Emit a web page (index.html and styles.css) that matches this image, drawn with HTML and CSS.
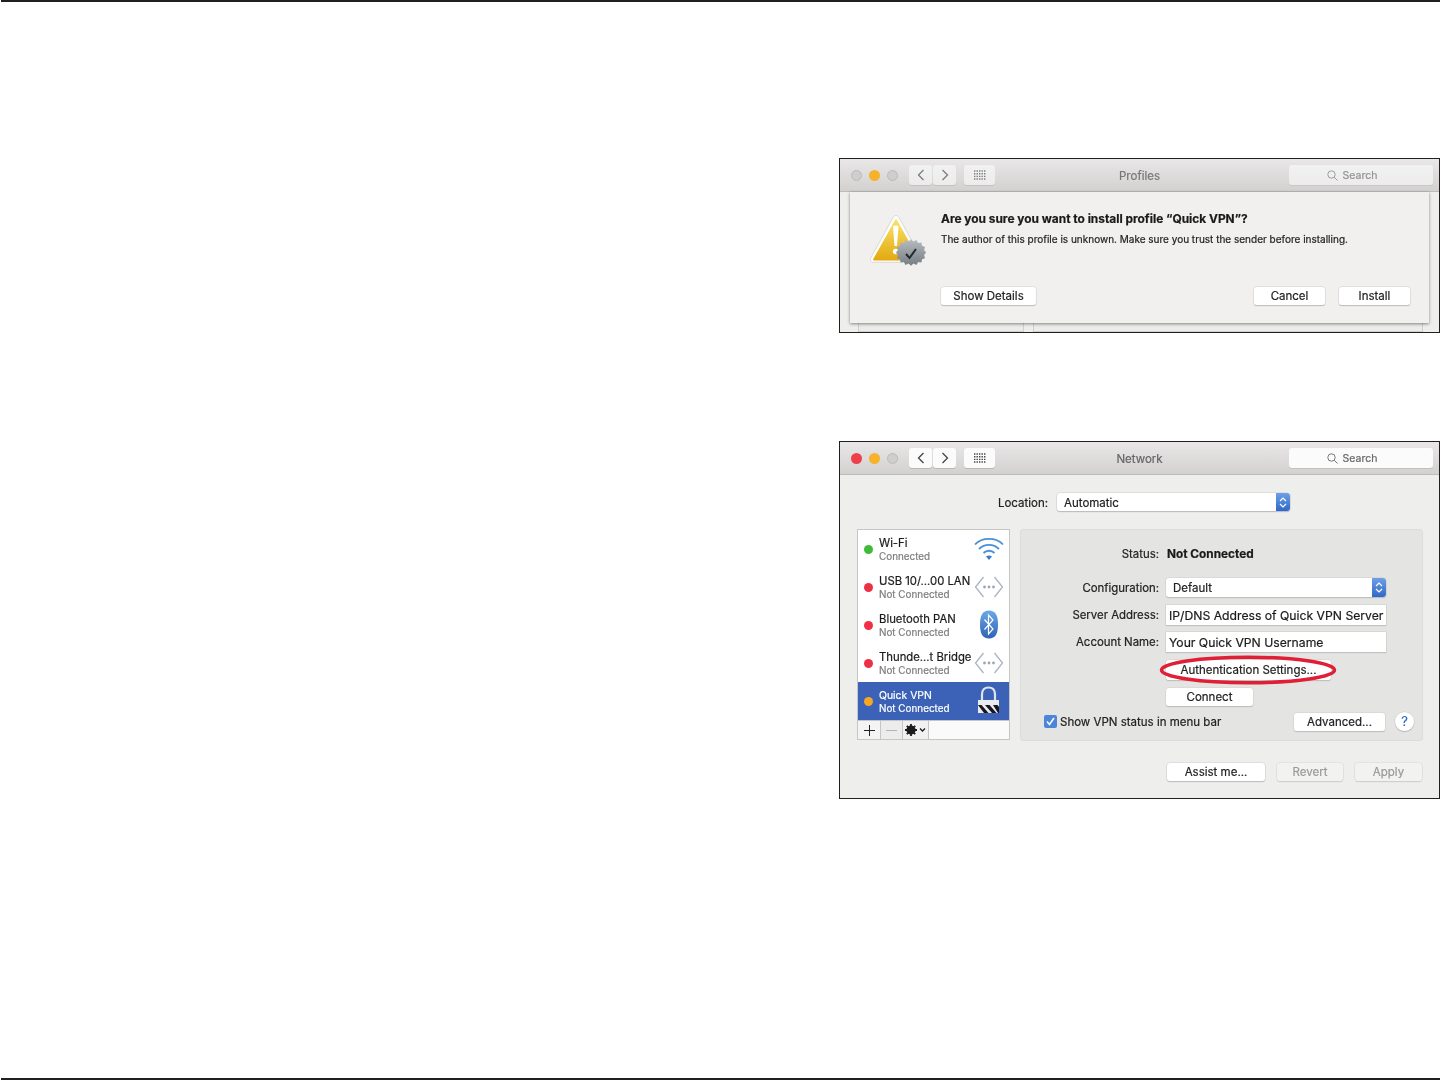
FILE: index.html
```html
<!DOCTYPE html>
<html lang="en">
<head>
<meta charset="utf-8">
<title>Quick VPN</title>
<link rel="stylesheet" href="styles.css">
</head>
<body>
<div class="rule-top"></div>
<main class="page">

<section class="win win-profiles">
  <header class="bar">
    <div class="lights"><i class="light off"></i><i class="light yellow"></i><i class="light off"></i></div>
    <div class="navs faded">
      <span class="nbtn"><svg width="10" height="14" viewBox="0 0 10 14"><path d="M7.500 2 2.500 7l5 5" class="chev"/></svg></span>
      <span class="nbtn"><svg width="10" height="14" viewBox="0 0 10 14"><path d="m2.500 2 5 5-5 5" class="chev"/></svg></span>
    </div>
    <span class="nbtn gridbtn faded"><svg width="14" height="10" viewBox="0 0 14 10"><path d="M1 1h12M1 3.700h12M1 6.400h12M1 9h12" class="dots"/></svg></span>
    <div class="title faded-title">Profiles</div>
    <div class="search faded"><svg width="11" height="11" viewBox="0 0 11 11"><circle cx="4.500" cy="4.500" r="3.700" class="lens"/><path d="m7.200 7.200 3.300 3.300" class="lens"/></svg><span>Search</span></div>
  </header>
  <div class="backdrop">
    <div class="back-pane p1"></div>
    <div class="back-pane p2"></div>
  </div>
  <div class="sheet">
    <svg class="warn" width="56" height="54" viewBox="0 0 56 54">
      <defs>
        <linearGradient id="y" x1="0" y1="0" x2="0" y2="1"><stop offset="0" stop-color="#fbe46a"/><stop offset="1" stop-color="#e2a90f"/></linearGradient>
        <linearGradient id="g" x1="0" y1="0" x2="0" y2="1"><stop offset="0" stop-color="#b6bcc0"/><stop offset="1" stop-color="#767d83"/></linearGradient>
      </defs>
      <path d="M26 .500c1.200 0 2.200.7 2.900 1.900L51 42.500c1.300 2.500.3 4.800-2.800 4.800H3.800C.7 47.300-.3 45 1 42.500L23.100 2.400C23.800 1.200 24.800.500 26 .500z" fill="#fdfdfb" stroke="#cfcdc9" stroke-width=".7"/>
      <path d="M26 3.500 48.500 43.500c.7 1.300.2 2-1.200 2H4.700c-1.400 0-1.900-.7-1.200-2z" fill="url(#y)"/>
      <path d="M23 11.500c0-1.500 5.500-1.500 5.500 0L27 31h-2.500z" fill="#fff"/><circle cx="25.700" cy="36.500" r="2.800" fill="#fff"/>
      <path d="M41 26l2.500 2.300 3-1.400 1.600 2.900 3.300-.3.600 3.200 3 1.200-.9 3.200 2 2.600-2 2.600.9 3.200-3 1.200-.6 3.200-3.300-.3-1.600 2.900-3-1.400-2.500 2.300-2.500-2.300-3 1.400-1.600-2.900-3.300.3-.6-3.200-3-1.200.9-3.200-2-2.600 2-2.600-.9-3.200 3-1.200.6-3.200 3.300.3 1.600-2.900 3 1.400z" fill="url(#g)" transform="translate(0 -1) scale(1 .97)"/>
      <path d="m36 39 3.500 4 6.500-9" fill="none" stroke="#26292c" stroke-width="2"/>
    </svg>
    <div class="sheet-body">
      <h1 class="sheet-title">Are you sure you want to install profile “Quick VPN”?</h1>
      <p class="sheet-text">The author of this profile is unknown. Make sure you trust the sender before installing.</p>
      <div class="sheet-actions">
        <span class="btn b-details">Show Details</span>
        <span class="btn b-cancel">Cancel</span>
        <span class="btn b-install">Install</span>
      </div>
    </div>
  </div>
</section>

<section class="win win-network">
  <header class="bar">
    <div class="lights"><i class="light red"></i><i class="light yellow"></i><i class="light off"></i></div>
    <div class="navs">
      <span class="nbtn"><svg width="10" height="14" viewBox="0 0 10 14"><path d="M7.500 2 2.500 7l5 5" class="chev"/></svg></span>
      <span class="nbtn"><svg width="10" height="14" viewBox="0 0 10 14"><path d="m2.500 2 5 5-5 5" class="chev"/></svg></span>
    </div>
    <span class="nbtn gridbtn"><svg width="14" height="10" viewBox="0 0 14 10"><path d="M1 1h12M1 3.700h12M1 6.400h12M1 9h12" class="dots"/></svg></span>
    <div class="title">Network</div>
    <div class="search"><svg width="11" height="11" viewBox="0 0 11 11"><circle cx="4.500" cy="4.500" r="3.700" class="lens"/><path d="m7.200 7.200 3.300 3.300" class="lens"/></svg><span>Search</span></div>
  </header>
  <div class="net-body">
    <div class="location">
      <span class="loc-label">Location:</span>
      <div class="popup loc-popup"><span>Automatic</span><i class="stepper"><svg width="8" height="13" viewBox="0 0 8 13"><path d="M1 5l3-3 3 3M1 8l3 3 3-3" class="step"/></svg></i></div>
    </div>
    <div class="columns">
      <div class="list">
        <div class="item">
          <i class="dot green"></i>
          <div class="names"><b>Wi-Fi</b><small>Connected</small></div>
          <svg class="ic" width="30" height="24" viewBox="0 0 30 24"><g fill="none" stroke="#4a90d9" stroke-width="1.800"><path d="M1 7.500C8 0 22 0 29 7.500"/><path d="M5 12c5.500-5.500 14.500-5.500 20 0"/><path d="M9.500 16c3-3 8-3 11 0"/></g><path d="M12 19.500c1.800-1.500 4.200-1.500 6 0L15 23z" fill="#3b7fcc"/></svg>
        </div>
        <div class="item">
          <i class="dot red"></i>
          <div class="names"><b>USB 10/...00 LAN</b><small>Not Connected</small></div>
          <svg class="ic" width="30" height="24" viewBox="0 0 30 24"><g fill="none" stroke="#a9b4c2" stroke-width="1.300"><path d="M9.500 2 1.500 12l8 10"/><path d="M20.500 2l8 10-8 10"/></g><g fill="#9aa6b6"><circle cx="10.500" cy="12" r="1.400"/><circle cx="15" cy="12" r="1.400"/><circle cx="19.500" cy="12" r="1.400"/></g></svg>
        </div>
        <div class="item">
          <i class="dot red"></i>
          <div class="names"><b>Bluetooth PAN</b><small>Not Connected</small></div>
          <svg class="ic ic-bt" width="20" height="29" viewBox="0 0 20 29"><defs><linearGradient id="bt" x1="0" y1="0" x2="0" y2="1"><stop offset="0" stop-color="#6fa8e8"/><stop offset="1" stop-color="#2d63b4"/></linearGradient></defs><path d="M10 .500c6.500 0 9 5 9 14s-2.500 14-9 14-9-5-9-14 2.500-14 9-14z" fill="url(#bt)"/><path d="M5.500 9.500 14 19l-4.500 5V5l4.500 5-8.500 9.500" fill="none" stroke="#fff" stroke-width="1.200"/></svg>
        </div>
        <div class="item">
          <i class="dot red"></i>
          <div class="names"><b>Thunde...t Bridge</b><small>Not Connected</small></div>
          <svg class="ic" width="30" height="24" viewBox="0 0 30 24"><g fill="none" stroke="#a9b4c2" stroke-width="1.300"><path d="M9.500 2 1.500 12l8 10"/><path d="M20.500 2l8 10-8 10"/></g><g fill="#9aa6b6"><circle cx="10.500" cy="12" r="1.400"/><circle cx="15" cy="12" r="1.400"/><circle cx="19.500" cy="12" r="1.400"/></g></svg>
        </div>
        <div class="item selected">
          <i class="dot amber"></i>
          <div class="names"><b>Quick VPN</b><small>Not Connected</small></div>
          <svg class="ic ic-lock" width="24" height="28" viewBox="0 0 24 28"><path d="M5 14V8.500C5 4 7.500 1.500 11.500 1.500S18 4 18 8.500V14" fill="none" stroke="#dfe3ec" stroke-width="2.200"/><rect x="1" y="14" width="21" height="13" fill="#e9ebef"/><path d="M1 19h3.500l7 8H7zM8 19h4.500l7 8H15zM16 19h4.500l1.500 2v6h-1z" fill="#15171c"/></svg>
        </div>
        <div class="tools">
          <span class="tool t-plus"><svg width="11" height="11" viewBox="0 0 11 11"><path d="M5.500 0v11M0 5.500h11" class="tool-line"/></svg></span>
          <span class="tool t-minus"><svg width="11" height="11" viewBox="0 0 11 11"><path d="M0 5.500h11" class="tool-line dim"/></svg></span>
          <span class="tool t-gear"><svg width="21" height="12" viewBox="0 0 21 12"><circle cx="6" cy="6" r="3.400" fill="none" stroke="#1c1c1c" stroke-width="2.400"/><path d="M6 0v12M0 6h12M1.800 1.800l8.400 8.400M10.200 1.800l-8.400 8.400" stroke="#1c1c1c" stroke-width="1.800"/><path d="m15 4.500 2.500 2.500L20 4.500" fill="none" stroke="#1c1c1c" stroke-width="1.300"/></svg></span>
          <span class="tool t-rest"></span>
        </div>
      </div>
      <div class="panel">
        <div class="row r-status"><span class="lab">Status:</span><strong class="status">Not Connected</strong></div>
        <div class="row r-config"><span class="lab">Configuration:</span><div class="popup cfg-popup"><span>Default</span><i class="stepper"><svg width="8" height="13" viewBox="0 0 8 13"><path d="M1 5l3-3 3 3M1 8l3 3 3-3" class="step"/></svg></i></div></div>
        <div class="row r-server"><span class="lab">Server Address:</span><div class="field">IP/DNS Address of Quick VPN Server</div></div>
        <div class="row r-account"><span class="lab">Account Name:</span><div class="field">Your Quick VPN Username</div></div>
        <div class="row r-auth"><span class="lab"></span><span class="btn b-auth">Authentication Settings...<svg class="oval" width="180" height="32" viewBox="0 0 180 32"><ellipse cx="90" cy="16" rx="86.500" ry="12.800" fill="none" stroke="#e01f36" stroke-width="3.500"/></svg></span></div>
        <div class="row r-connect"><span class="lab"></span><span class="btn b-connect">Connect</span></div>
        <div class="row r-check">
          <label class="check"><i class="box"><svg width="13" height="13" viewBox="0 0 13 13"><path d="m3 6.500 2.500 3L10 3" fill="none" stroke="#fff" stroke-width="1.500"/></svg></i>Show VPN status in menu bar</label>
          <span class="btn b-adv">Advanced...</span>
          <span class="help">?</span>
        </div>
      </div>
    </div>
    <div class="foot">
      <span class="btn b-assist">Assist me...</span>
      <span class="btn b-revert off-btn">Revert</span>
      <span class="btn b-apply off-btn">Apply</span>
    </div>
  </div>
</section>

</main>
<div class="rule-bottom"></div>
</body>
</html>
```
FILE: styles.css
```css
* { box-sizing: border-box; }
html, body { margin: 0; padding: 0; }
body {
  width: 1440px;
  height: 1081px;
  background: #fff;
  display: flex;
  flex-direction: column;
  font-family: Inter, "Liberation Sans", sans-serif;
  font-size: 12px;
  color: #222;
  overflow: hidden;
}
.rule-top { height: 2px; margin-left: 1px; background: #231f20; flex: none; }
.rule-bottom { height: 2px; margin: 0 0 1px 1px; background: #231f20; flex: none; }
.page {
  flex: 1;
  padding: 156px 0 0 839px;
  display: flex;
  flex-direction: column;
  gap: 108px;
}
.win {
  width: 601px;
  border: 1px solid #231f20;
  background: #eeeeed;
  position: relative;
  filter: blur(.25px);
  -webkit-text-stroke: .2px currentColor;
}
.win-profiles { height: 175px; }
.win-network { height: 358px; }

.bar {
  height: 33px;
  display: flex;
  align-items: center;
  padding: 0 6px 0 11px;
  background: linear-gradient(#e9e7e7, #d3d0d0);
  border-bottom: 1px solid #bdbbbb;
  position: relative;
}
.lights { display: flex; gap: 7px; width: 58px; flex: none; }
.light { width: 11px; height: 11px; border-radius: 50%; display: block; }
.light.off { background: #d0cecd; border: 1px solid #bdbbba; }
.light.yellow { background: #f6b22a; }
.light.red { background: #ee3f4d; }
.navs { display: flex; gap: 1px; flex: none; }
.nbtn {
  width: 23px;
  height: 20px;
  background: #fbfbfb;
  border-radius: 3px;
  box-shadow: 0 1px 0 #b9b7b7;
  display: flex;
  align-items: center;
  justify-content: center;
}
.chev { fill: none; stroke: #444; stroke-width: 1.300; }
.gridbtn { width: 31px; margin-left: 8px; flex: none; }
.dots { fill: none; stroke: #444; stroke-width: 1.400; stroke-dasharray: 1.400 1.100; }
.title { flex: 1; text-align: center; font-size: 11.500px; color: #666; padding: 2px 5px 0 0; }
.search {
  width: 144px;
  height: 20px;
  background: #fbfbfb;
  border-radius: 3px;
  box-shadow: 0 1px 0 #c2c0c0;
  display: flex;
  align-items: center;
  justify-content: center;
  gap: 5px;
  padding-right: 18px;
  font-size: 10.500px;
  color: #666;
}
.lens { fill: none; stroke: #777; stroke-width: 1; }
.faded { opacity: .62; }
.faded-title { color: #777; }

.backdrop { height: 140px; position: relative; }
.back-pane { position: absolute; bottom: 0; top: 0; border: 1px solid #cfcfcf; background: #ececeb; }
.p1 { left: 18px; width: 166px; }
.p2 { left: 193px; width: 390px; }

.sheet {
  position: absolute;
  left: 10px;
  top: 33px;
  width: 579px;
  height: 131px;
  background: #f1f0ef;
  box-shadow: 0 1px 3px rgba(0, 0, 0, .45);
  display: flex;
  padding: 23px 0 0 20px;
}
.warn { flex: none; overflow: visible; }
.sheet-body { margin-left: 15px; flex: 1; display: flex; flex-direction: column; }
.sheet-title { margin: -4px 0 0; font-size: 11.900px; line-height: 15px; font-weight: 700; color: #1a1a1a; }
.sheet-text { margin: 7px 0 0; font-size: 10px; line-height: 13px; color: #222; white-space: nowrap; }
.sheet-actions { display: flex; margin-top: 41px; }

.btn {
  display: flex;
  align-items: center;
  justify-content: center;
  height: 18px;
  background: #fff;
  border-radius: 3px;
  box-shadow: 0 0 0 .5px #d2d0d0, 0 1px 1px #aaa;
  font-size: 11.500px;
  color: #222;
  flex: none;
  position: relative;
}
.b-details { width: 95px; }
.b-cancel { width: 71px; margin-left: 218px; }
.b-install { width: 71px; margin-left: 14px; }

.net-body { padding: 18px 16px 0 17px; }
.location { display: flex; align-items: center; height: 18px; }
.loc-label { width: 191px; text-align: right; font-size: 11.500px; padding-top: 1px; }
.popup {
  display: flex;
  align-items: center;
  justify-content: space-between;
  background: #fff;
  border-radius: 3px;
  box-shadow: 0 0 0 .5px #cfcdcd, 0 1px 1px #aaa;
  font-size: 11.500px;
  overflow: hidden;
}
.popup span { padding: 1px 0 0 7px; }
.loc-popup { width: 233px; height: 18px; margin-left: 9px; }
.cfg-popup { width: 220px; height: 19px; }
.stepper {
  width: 14px;
  align-self: stretch;
  background: linear-gradient(#6ea0e6, #2f69c8);
  display: flex;
  align-items: center;
  justify-content: center;
}
.step { fill: none; stroke: #fff; stroke-width: 1.200; }

.columns { display: flex; margin-top: 18px; gap: 10px; align-items: flex-start; }
.list {
  width: 153px;
  height: 211px;
  border: 1px solid #c6c6c6;
  background: #fff;
  display: flex;
  flex-direction: column;
}
.item {
  height: 38px;
  flex: none;
  display: flex;
  align-items: center;
  padding: 0 5px 0 6px;
  position: relative;
}
.dot { width: 9px; height: 9px; border-radius: 50%; flex: none; display: block; margin-right: 6px; }
.dot.green { background: #3fbb3a; }
.dot.red { background: #ef2f45; }
.dot.amber { background: #f5a623; }
.names { display: flex; flex-direction: column; flex: 1; min-width: 0; padding-top: 1px; }
.names b { font-weight: 400; font-size: 11.300px; line-height: 13px; color: #1a1a1a; white-space: nowrap; }
.names small { font-size: 9.900px; line-height: 12px; color: #7d7d7d; white-space: nowrap; }
.ic { position: absolute; right: 5px; top: 7px; }
.ic-bt { right: 10px; top: 4px; }
.ic-lock { right: 8px; top: 4px; }
.selected { background: #3b62b6; }
.selected .names b, .selected .names small { color: #fff; }
.selected .names b { font-size: 10.400px; }
.tools { flex: 1; display: flex; background: #f4f4f4; border-top: 1px solid #c6c6c6; }
.tool { display: flex; align-items: center; justify-content: center; border-right: 1px solid #c6c6c6; }
.t-plus { width: 23px; }
.t-minus { width: 22px; background: #ececec; }
.t-gear { width: 26px; background: #f1f1f1; }
.t-rest { flex: 1; border-right: 0; background: #fafafa; }
.tool-line { fill: none; stroke: #222; stroke-width: 1; }
.tool-line.dim { stroke: #b4b4b4; }

.panel {
  width: 403px;
  height: 212px;
  background: #e4e4e2;
  border: 1px solid #dcdcda;
  border-radius: 3px;
  padding-top: 15px;
}
.row { display: flex; align-items: center; gap: 7px; padding-left: 0; }
.lab { width: 138px; text-align: right; font-size: 11.400px; color: #222; flex: none; }
.status { font-size: 11.800px; font-weight: 700; color: #1a1a1a; margin-left: 1px; }
.r-status { height: 18px; }
.r-config { margin-top: 15px; }
.r-server { margin-top: 8px; }
.r-account { margin-top: 7px; }
.r-auth { margin-top: 8px; }
.r-connect { margin-top: 8px; }
.r-check { margin-top: 6px; height: 19px; gap: 0; padding-left: 23px; }
.field {
  width: 220px;
  height: 20px;
  background: #fff;
  box-shadow: 0 0 0 .5px #c9c9c7, 0 1px 1px #bbb;
  display: flex;
  align-items: center;
  padding-left: 3px;
  font-size: 12.200px;
  white-space: nowrap;
  color: #1a1a1a;
}
.b-auth { width: 165px; height: 20px; }
.oval { position: absolute; left: -8px; top: -6px; }
.b-connect { width: 87px; }
.check { display: flex; align-items: center; width: 250px; font-size: 11.500px; }
.box { width: 13px; height: 13px; background: #4d86d8; border-radius: 2px; display: block; margin-right: 3px; flex: none; line-height: 0; }
.b-adv { width: 91px; }
.help {
  width: 19px;
  height: 19px;
  border-radius: 50%;
  background: #fff;
  margin-left: 10px;
  box-shadow: 0 0 0 .5px #ccc, 0 1px 1px #aaa;
  color: #2f69c8;
  text-align: center;
  line-height: 19px;
  font-size: 13px;
}

.foot { display: flex; margin-top: 22px; padding-left: 310px; }
.b-assist { width: 98px; }
.b-revert { width: 66px; margin-left: 12px; }
.b-apply { width: 67px; margin-left: 12px; }
.off-btn { background: #f2f2f1; color: #9a9a9a; box-shadow: 0 0 0 .5px #d8d8d8, 0 1px 1px #c4c4c4; }
```
